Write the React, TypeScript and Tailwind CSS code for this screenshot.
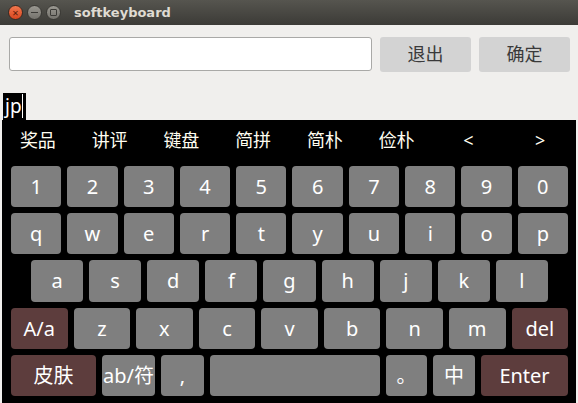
import React from "react";

const candidates = ["奖品", "讲评", "键盘", "简拼", "简朴", "俭朴", "<", ">"];
const digits = ["1", "2", "3", "4", "5", "6", "7", "8", "9", "0"];
const qrow = ["q", "w", "e", "r", "t", "y", "u", "i", "o", "p"];
const arow = ["a", "s", "d", "f", "g", "h", "j", "k", "l"];
const zrow = ["z", "x", "c", "v", "b", "n", "m"];

function Key({ label, dark, className = "" }: { label: string; dark?: boolean; className?: string }) {
  return (
    <div
      className={`flex items-center justify-center rounded-[4px] text-[20px] leading-none text-white ${
        dark ? "bg-[#5d3d3d]" : "bg-[#7f7f7f]"
      } ${className}`}
    >
      {label}
    </div>
  );
}

function TitleBar() {
  return (
    <div className="flex h-[25px] items-center bg-gradient-to-b from-[#56554f] to-[#3c3b37]">
      <div className="ml-[8px] flex items-center gap-[4px]">
        <div className="flex h-[15px] w-[15px] items-center justify-center rounded-full border border-[#3a2a22] bg-gradient-to-b from-[#f2774d] to-[#d8461f] text-[11px] leading-none text-[#5a1a08]">
          ×
        </div>
        <div className="flex h-[15px] w-[15px] items-center justify-center rounded-full border border-[#3a3935] bg-gradient-to-b from-[#9a9891] to-[#75736d]">
          <div className="h-[1.5px] w-[7px] bg-[#3c3b37]" />
        </div>
        <div className="flex h-[15px] w-[15px] items-center justify-center rounded-full border border-[#3a3935] bg-gradient-to-b from-[#9a9891] to-[#75736d]">
          <div className="h-[7px] w-[7px] rounded-[1px] border border-[#3c3b37]" />
        </div>
      </div>
      <span className="ml-[13px] font-['DejaVu_Sans',sans-serif] text-[13px] font-bold text-[#dfdbd2]">
        softkeyboard
      </span>
    </div>
  );
}

export default function App() {
  return (
    <div className="flex h-[403px] w-[578px] flex-col overflow-hidden bg-[#f0efed] font-['Noto_Sans','Noto_Sans_CJK_SC',sans-serif]">
      <TitleBar />

      <div className="flex items-center gap-[8px] pl-[9px] pr-[8px] pt-[12px]">
        <div className="h-[34px] flex-1 rounded-[3px] border border-[#a9a9a7] bg-white" />
        <button className="h-[35px] w-[91px] rounded-[3px] bg-[#d3d3d3] text-[18px] text-[#3a3a3a]">退出</button>
        <button className="h-[35px] w-[91px] rounded-[3px] bg-[#d3d3d3] text-[18px] text-[#3a3a3a]">确定</button>
      </div>

      <div className="ml-[3px] mt-[21px] flex h-[28px] w-[23px] items-center bg-black pl-[2px]">
        <span className="text-[19px] leading-none text-white">jp</span>
        <div className="h-[24px] w-px bg-white" />
      </div>

      <div className="mx-[2px] flex flex-1 flex-col gap-[6px] bg-black pb-[7px]">
        <div className="flex h-[40px] items-center">
          {candidates.map((c) => (
            <div key={c} className="flex flex-1 items-center justify-center text-[18px] text-[#fffdf0]">
              {c}
            </div>
          ))}
        </div>

        <div className="flex h-[41px] gap-[6px] pl-[9px] pr-[8px]">
          {digits.map((d) => (
            <Key key={d} label={d} className="flex-1" />
          ))}
        </div>

        <div className="flex h-[41px] gap-[6px] pl-[9px] pr-[8px]">
          {qrow.map((d) => (
            <Key key={d} label={d} className="flex-1" />
          ))}
        </div>

        <div className="flex h-[42px] gap-[6px] pl-[29px] pr-[28px]">
          {arow.map((d) => (
            <Key key={d} label={d} className="flex-1" />
          ))}
        </div>

        <div className="flex h-[41px] gap-[6px] pl-[9px] pr-[8px]">
          <Key label="A/a" dark className="flex-1" />
          {zrow.map((d) => (
            <Key key={d} label={d} className="flex-1" />
          ))}
          <Key label="del" dark className="flex-1" />
        </div>

        <div className="flex h-[41px] gap-[6px] pl-[9px] pr-[8px]">
          <Key label="皮肤" dark className="w-[85px]" />
          <Key label="ab/符" className="w-[53px] whitespace-nowrap" />
          <Key label="," className="w-[43px]" />
          <Key label="" className="w-[170px]" />
          <Key label="。" className="w-[41px]" />
          <Key label="中" className="w-[42px]" />
          <Key label="Enter" dark className="flex-1" />
        </div>
      </div>
    </div>
  );
}
